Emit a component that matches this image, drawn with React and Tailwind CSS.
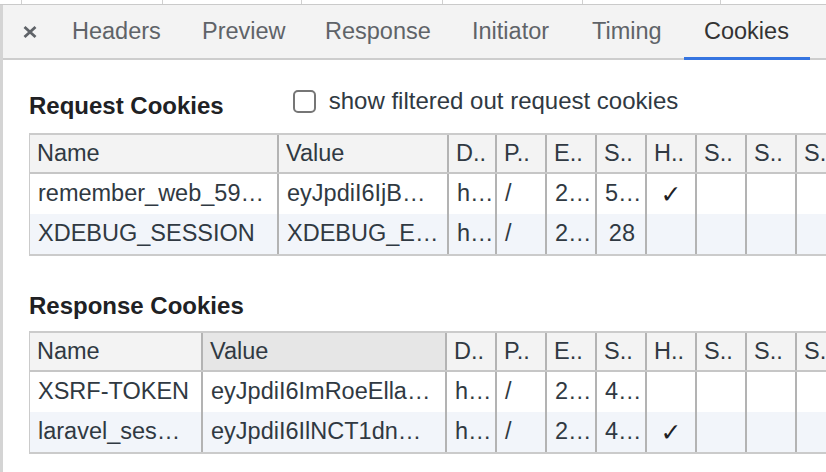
import React from 'react';

// column definitions for the two cookie tables (widths include the 2px divider)
const reqCols = [
  { w: 'w-[249px]', head: 'Name' },
  { w: 'w-[170px]', head: 'Value' },
  { w: 'w-[48px]', head: 'D..' },
  { w: 'w-[50px]', head: 'P..' },
  { w: 'w-[50px]', head: 'E..' },
  { w: 'w-[50px]', head: 'S..', right: true },
  { w: 'w-[50px]', head: 'H..', center: true },
  { w: 'w-[50px]', head: 'S..' },
  { w: 'w-[50px]', head: 'S..' },
  { w: 'w-[50px]', head: 'S..' },
];

const resCols = [
  { w: 'w-[173px]', head: 'Name' },
  { w: 'w-[244px]', head: 'Value', sorted: true },
  { w: 'w-[50px]', head: 'D..' },
  { w: 'w-[50px]', head: 'P..' },
  { w: 'w-[50px]', head: 'E..' },
  { w: 'w-[50px]', head: 'S..', right: true },
  { w: 'w-[50px]', head: 'H..', center: true },
  { w: 'w-[50px]', head: 'S..' },
  { w: 'w-[50px]', head: 'S..' },
  { w: 'w-[50px]', head: 'S..' },
];

const reqRows = [
  ['remember_web_59…', 'eyJpdiI6IjB…', 'h…', '/', '2…', '5…', '✓', '', '', ''],
  ['XDEBUG_SESSION', 'XDEBUG_E…', 'h…', '/', '2…', '28', '', '', '', ''],
];

const resRows = [
  ['XSRF-TOKEN', 'eyJpdiI6ImRoeElla…', 'h…', '/', '2…', '4…', '', '', '', ''],
  ['laravel_ses…', 'eyJpdiI6IlNCT1dn…', 'h…', '/', '2…', '4…', '✓', '', '', ''],
];

const tabs = [
  { label: 'Headers', w: 'w-[130px]' },
  { label: 'Preview', w: 'w-[123px]' },
  { label: 'Response', w: 'w-[147px]' },
  { label: 'Initiator', w: 'w-[120px]' },
  { label: 'Timing', w: 'w-[112px]' },
  { label: 'Cookies', w: 'w-[126px]', active: true },
];

function CookieTable({ cols, rows }) {
  return (
    <div className="w-[900px] border-y-2 border-l border-[#cbcbcb]">
      <div className="flex h-[39px] bg-[#f3f3f3] border-b-2 border-[#c6c6c6]">
        {cols.map((c, i) => (
          <div
            key={i}
            className={`${c.w} shrink-0 flex items-center pl-[7px] border-r-2 border-[#b3b3b3] overflow-hidden whitespace-nowrap ${c.sorted ? 'bg-[#e6e6e6]' : ''}`}
          >
            {c.head}
          </div>
        ))}
      </div>
      {rows.map((r, ri) => (
        <div key={ri} className={`flex h-[40px] ${ri % 2 === 1 ? 'bg-[#f2f5fa]' : 'bg-white'}`}>
          {r.map((v, ci) => {
            const c = cols[ci];
            const align = c.center ? 'justify-center' : c.right && !v.includes('…') ? 'justify-end pr-[10px]' : 'pl-[8px]';
            return (
              <div
                key={ci}
                className={`${c.w} shrink-0 flex items-center ${align} border-r-2 border-[#b3b3b3] overflow-hidden whitespace-nowrap`}
              >
                {v === '✓' ? (
                  <span className="text-[25px] font-bold leading-none text-[#202124] font-['DejaVu_Sans',sans-serif]">✓</span>
                ) : (
                  v
                )}
              </div>
            );
          })}
        </div>
      ))}
    </div>
  );
}

export default function App() {
  return (
    <div className="w-[826px] h-[472px] overflow-hidden bg-white text-[#303942] text-[23.5px] font-['Liberation_Sans',Arial,sans-serif]">
      {/* bottom edge of the request list above */}
      <div className="flex h-[5px] border-b border-[#cacaca]">
        <div className="w-[22px] shrink-0 border-r border-[#d0d0d0]" />
        <div className="w-[141px] shrink-0 border-r border-[#d0d0d0]" />
        <div className="w-[139px] shrink-0 border-r border-[#d0d0d0]" />
        <div className="w-[141px] shrink-0 border-r border-[#d0d0d0]" />
        <div className="w-[140px] shrink-0 border-r border-[#d0d0d0]" />
        <div className="w-[138px] shrink-0 border-r border-[#d0d0d0]" />
        <div className="flex-1" />
      </div>

      <div className="flex h-[467px]">
        <div className="w-[3px] shrink-0 bg-[#d4d4d4]" />
        <div className="flex-1 min-w-0">
          {/* tab strip */}
          <div className="flex h-[55px] bg-[#f3f3f3] border-b-2 border-[#cdcdcd]">
            <div className="w-[49px] shrink-0 flex items-center pl-[19px]">
              <svg width="16" height="16" viewBox="0 0 16 16" fill="none">
                <path d="M2.5 3L13.5 13M13.5 3L2.5 13" stroke="#5f6368" strokeWidth="2.8" />
              </svg>
            </div>
            {tabs.map((t) => (
              <div
                key={t.label}
                className={`${t.w} shrink-0 relative flex items-center pl-[20px] ${t.active ? 'text-[#333333]' : 'text-[#5f6368]'}`}
              >
                {t.label}
                {t.active && <span className="absolute left-0 right-0 bottom-[-2px] h-[3px] bg-[#3574e0]" />}
              </div>
            ))}
          </div>

          {/* cookies view */}
          <div className="pl-[26px]">
            <div className="flex items-center h-[32px] mt-[28px] mb-[13px]">
              <div className="pt-[4px] text-[24px] font-bold text-[#202124]">Request Cookies</div>
              <div className="flex items-center ml-[69px] -mt-[6px]">
                <span className="w-[23px] h-[23px] rounded-[5px] border-2 border-[#767676] bg-white" />
                <span className="ml-[13px] text-[24px]">show filtered out request cookies</span>
              </div>
            </div>
            <CookieTable cols={reqCols} rows={reqRows} />

            <div className="flex items-center h-[32px] mt-[32px] mb-[11px]">
              <div className="pt-[4px] text-[24px] font-bold text-[#202124]">Response Cookies</div>
            </div>
            <CookieTable cols={resCols} rows={resRows} />
          </div>
        </div>
      </div>
    </div>
  );
}
